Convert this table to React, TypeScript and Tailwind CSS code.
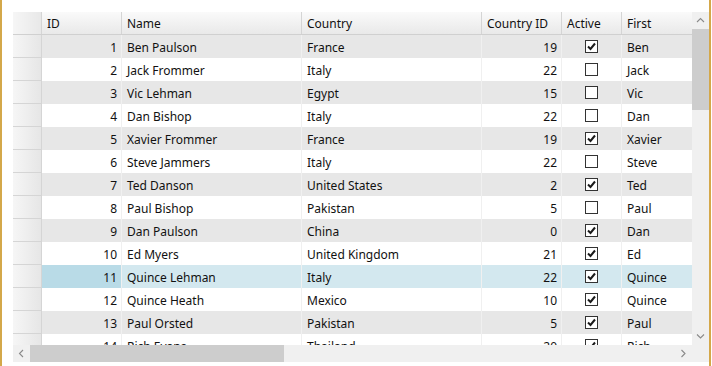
import React from "react";

type Row = [number, string, string, number, boolean, string];

const rows: Row[] = [
  [1, "Ben Paulson", "France", 19, true, "Ben"],
  [2, "Jack Frommer", "Italy", 22, false, "Jack"],
  [3, "Vic Lehman", "Egypt", 15, false, "Vic"],
  [4, "Dan Bishop", "Italy", 22, false, "Dan"],
  [5, "Xavier Frommer", "France", 19, true, "Xavier"],
  [6, "Steve Jammers", "Italy", 22, false, "Steve"],
  [7, "Ted Danson", "United States", 2, true, "Ted"],
  [8, "Paul Bishop", "Pakistan", 5, false, "Paul"],
  [9, "Dan Paulson", "China", 0, true, "Dan"],
  [10, "Ed Myers", "United Kingdom", 21, true, "Ed"],
  [11, "Quince Lehman", "Italy", 22, true, "Quince"],
  [12, "Quince Heath", "Mexico", 10, true, "Quince"],
  [13, "Paul Orsted", "Pakistan", 5, true, "Paul"],
  [14, "Rich Evans", "Thailand", 20, true, "Rich"],
];

const SELECTED = 11;

function CheckBox({ checked }: { checked: boolean }) {
  return (
    <div className="flex h-[13px] w-[13px] items-center justify-center border border-[#333333] bg-white">
      {checked && (
        <svg width="9" height="9" viewBox="0 0 9 9">
          <path d="M1 4.5 L3.5 7 L8 1.5" fill="none" stroke="#1a1a1a" strokeWidth="2" />
        </svg>
      )}
    </div>
  );
}

function Chevron({ dir }: { dir: "up" | "down" | "left" | "right" }) {
  const d = {
    up: "M1 5 L4.5 1.5 L8 5",
    down: "M1 1.5 L4.5 5 L8 1.5",
    left: "M5 1 L1.5 4.5 L5 8",
    right: "M1.5 1 L5 4.5 L1.5 8",
  }[dir];
  const vertical = dir === "up" || dir === "down";
  return (
    <svg width={vertical ? 9 : 7} height={vertical ? 7 : 9} viewBox={vertical ? "0 0 9 7" : "0 0 7 9"}>
      <path d={d} fill="none" stroke="#8a8a8a" strokeWidth="1.1" />
    </svg>
  );
}

function HeaderCell({ w, label, last }: { w: string; label: string; last?: boolean }) {
  return (
    <div className={`${w} flex shrink-0 items-center pl-[5px] pt-[2px] ${last ? "" : "border-r border-[#d5d5d5]"}`}>
      {label}
    </div>
  );
}

export default function App() {
  return (
    <div
      className="flex h-[366px] w-[712px] overflow-hidden bg-white text-[12px] text-[#111]"
      style={{ fontFamily: '"Segoe UI", "Noto Sans", sans-serif' }}
    >
      <div className="w-[2px] shrink-0 bg-[#d4a84a]" />
      <div className="flex w-[707px] shrink-0 flex-col pl-[11px] pt-[12px]">
        <div className="flex h-[333px]">
          {/* grid body */}
          <div className="w-[679px] overflow-hidden">
            <div className="flex h-[23px] border-b border-[#d0d0d0] bg-linear-to-b from-[#fafafa] to-[#e9e9e9]">
              <div className="w-[29px] shrink-0 border-r border-[#d5d5d5] bg-linear-to-r from-[#f6f6f6] to-[#e8e8e8]" />
              <HeaderCell w="w-[80px]" label="ID" />
              <HeaderCell w="w-[180px]" label="Name" />
              <HeaderCell w="w-[180px]" label="Country" />
              <HeaderCell w="w-[80px]" label="Country ID" />
              <HeaderCell w="w-[60px]" label="Active" />
              <HeaderCell w="w-[70px]" label="First" last />
            </div>
            {rows.map(([id, name, country, cid, active, first]) => {
              const sel = id === SELECTED;
              const bg = sel ? "bg-[#d3e8ef]" : id % 2 === 1 ? "bg-[#e7e7e7]" : "bg-white";
              return (
                <div key={id} className={`flex h-[23px] ${bg}`}>
                  <div className="w-[29px] shrink-0 border-b border-r border-[#d5d5d5] bg-linear-to-r from-[#f6f6f6] to-[#e6e6e6]" />
                  <div
                    className={`flex w-[80px] shrink-0 items-center justify-end border-r border-[#f0f0f0] pr-[4px] pt-[2px] ${
                      sel ? "bg-[#b9dbe7]" : ""
                    }`}
                  >
                    {id}
                  </div>
                  <div className="flex w-[180px] shrink-0 items-center border-r border-[#f0f0f0] pl-[5px] pt-[2px]">
                    {name}
                  </div>
                  <div className="flex w-[180px] shrink-0 items-center border-r border-[#f0f0f0] pl-[5px] pt-[2px]">
                    {country}
                  </div>
                  <div className="flex w-[80px] shrink-0 items-center justify-end border-r border-[#f0f0f0] pr-[4px] pt-[2px]">
                    {cid}
                  </div>
                  <div className="flex w-[60px] shrink-0 items-center justify-center border-r border-[#f0f0f0]">
                    <CheckBox checked={active} />
                  </div>
                  <div className="flex w-[70px] shrink-0 items-center pl-[5px] pt-[2px]">{first}</div>
                </div>
              );
            })}
          </div>
          {/* vertical scrollbar */}
          <div className="flex w-[17px] shrink-0 flex-col bg-[#f0f0f0]">
            <div className="flex h-[17px] items-center justify-center">
              <Chevron dir="up" />
            </div>
            <div className="h-[81px] bg-[#cdcdcd]" />
            <div className="flex-1" />
            <div className="flex h-[17px] items-center justify-center">
              <Chevron dir="down" />
            </div>
          </div>
        </div>
        {/* horizontal scrollbar */}
        <div className="flex h-[17px]">
          <div className="flex w-[679px] bg-[#f0f0f0]">
            <div className="flex w-[17px] items-center justify-center">
              <Chevron dir="left" />
            </div>
            <div className="w-[254px] bg-[#cdcdcd]" />
            <div className="flex-1" />
            <div className="flex w-[17px] items-center justify-center">
              <Chevron dir="right" />
            </div>
          </div>
          <div className="w-[17px] bg-[#f0f0f0]" />
        </div>
      </div>
      <div className="w-[2px] shrink-0 bg-[#d4a84a]" />
    </div>
  );
}
